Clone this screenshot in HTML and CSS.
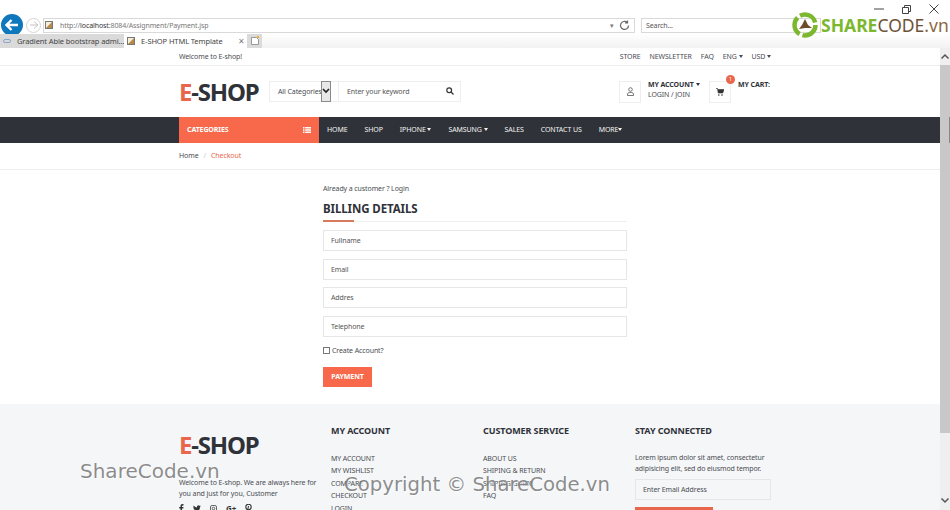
FILE: index.html
```html
<!DOCTYPE html>
<html lang="en">
<head>
<meta charset="utf-8">
<title>E-SHOP HTML Template</title>
<link rel="stylesheet" href="styles.css">
</head>
<body>
<div class="window">
  <header class="chrome">
    <div class="win-controls">
      <svg width="10" height="2" viewBox="0 0 10 2"><path d="M0 1h10" stroke="#444"/></svg>
      <svg width="9" height="9" viewBox="0 0 9 9"><path d="M.5 2.500h6v6h-6zM2.500 2.500v-2h6v6h-2" fill="none" stroke="#444"/></svg>
      <svg width="10" height="10" viewBox="0 0 10 10"><path d="M.5.5l9 9M9.500.5l-9 9" stroke="#444"/></svg>
    </div>
    <div class="addr-row">
      <span class="back"><svg width="14" height="12" viewBox="0 0 14 12"><path d="M6.500 1L1.500 6l5 5M2 6h11" fill="none" stroke="#fff" stroke-width="2.400"/></svg></span>
      <span class="forward"><svg width="10" height="8" viewBox="0 0 10 8"><path d="M5 .5L9 4 5 7.500M9 4H1" fill="none" stroke="#c4c4c4"/></svg></span>
      <div class="addr">
        <span class="favicon"></span>
        <span class="url">http://<b>localhost</b>:8084/Assignment/Payment.jsp</span>
        <span class="addr-tools">▾
          <svg width="11" height="11" viewBox="0 0 11 11"><path d="M9.500 5.500a4 4 0 1 1-1.300-3M8.500 .5v2.500H6" fill="none" stroke="#666" stroke-width="1.200"/></svg>
        </span>
      </div>
      <div class="search-box">Search...</div>
    </div>
    <div class="tabs">
      <div class="tab tab-off"><span class="cloud"></span>Gradient Able bootstrap admi...</div>
      <div class="tab tab-on"><span class="favicon"></span>E-SHOP HTML Template<span class="tab-x">×</span></div>
      <div class="tab-new"><svg width="10" height="10" viewBox="0 0 10 10"><path d="M1.500 1.500h5l2 2v5h-7z" fill="#fff" stroke="#999"/><path d="M7 0h2v2H7z" fill="#f0b030"/></svg></div>
    </div>
  </header>

  <div class="viewport">
    <main class="page">
      <div class="topbar">
        <div class="container topbar-in">
          <span>Welcome to E-shop!</span>
          <nav class="toplinks">
            <span>STORE</span><span>NEWSLETTER</span><span>FAQ</span><span>ENG <i class="caret"></i></span><span>USD <i class="caret"></i></span>
          </nav>
        </div>
      </div>

      <div class="container head">
        <div class="logo"><em>E</em>-SHOP</div>
        <div class="search">
          <span class="cat">All Categories<span class="cat-btn"><svg width="8" height="6" viewBox="0 0 8 6"><path d="M1 1l3 3 3-3" fill="none" stroke="#222" stroke-width="1.600"/></svg></span></span>
          <span class="kw">Enter your keyword</span>
          <svg class="mag" width="8" height="8" viewBox="0 0 8 8"><circle cx="3.200" cy="3.200" r="2.400" fill="none" stroke="#333" stroke-width="1.200"/><path d="M5 5l2.500 2.500" stroke="#333" stroke-width="1.300"/></svg>
        </div>
        <div class="acct">
          <span class="iconbox"><svg width="7" height="9" viewBox="0 0 7 9"><circle cx="3.500" cy="2.500" r="1.800" fill="none" stroke="#555" stroke-width=".8"/><path d="M.5 8.500V7a2 2 0 0 1 2-1.500h2A2 2 0 0 1 6.500 7v1.500z" fill="none" stroke="#555" stroke-width=".8"/></svg></span>
          <div class="acct-text"><b>MY ACCOUNT <i class="caret"></i></b><span>LOGIN / JOIN</span></div>
        </div>
        <div class="cart">
          <span class="iconbox"><svg width="8" height="8" viewBox="0 0 8 8"><path d="M0 .5h1.500L2.200 5h4.600L8 1.500H2" fill="#333" stroke="#333" stroke-width=".6"/><circle cx="2.800" cy="7" r=".8" fill="#333"/><circle cx="6" cy="7" r=".8" fill="#333"/></svg><span class="badge">1</span></span>
          <b>MY CART:</b>
        </div>
      </div>

      <div class="navbar">
        <div class="container nav-in">
          <div class="cats"><span>CATEGORIES</span><svg width="8" height="6" viewBox="0 0 8 6"><path d="M0 0h1.500v1.500H0zM2.200 0H8v1.500H2.200zM0 2.200h1.500v1.500H0zM2.200 2.200H8v1.500H2.200zM0 4.400h1.500V6H0zM2.200 4.400H8V6H2.200z" fill="#fff"/></svg></div>
          <nav class="menu">
            <span>HOME</span><span>SHOP</span><span>IPHONE <i class="caret"></i></span><span>SAMSUNG <i class="caret"></i></span><span>SALES</span><span>CONTACT US</span><span>MORE<i class="caret"></i></span>
          </nav>
        </div>
      </div>

      <div class="crumbs">
        <div class="container"><span>Home</span><span class="sep">/</span><span class="cur">Checkout</span></div>
      </div>

      <section class="checkout">
        <p class="already">Already a customer ? Login</p>
        <h2 class="title">BILLING DETAILS</h2>
        <div class="field">Fullname</div>
        <div class="field">Email</div>
        <div class="field">Addres</div>
        <div class="field">Telephone</div>
        <label class="create"><span class="check"></span>Create Account?</label>
        <div class="pay">PAYMENT</div>
      </section>

      <footer class="footer">
        <div class="container foot-grid">
          <div class="foot-about">
            <div class="logo"><em>E</em>-SHOP</div>
            <p>Welcome to E-shop. We are always here for you and just for you, Customer</p>
            <div class="social">
              <svg width="5" height="8" viewBox="0 0 5 8"><path d="M1.500 8V4.500H.2V3h1.300V2C1.500.7 2.300 0 3.400 0h1.100v1.400h-.7c-.6 0-.8.3-.8.8V3h1.500l-.2 1.500H3V8z" fill="#333"/></svg>
              <svg width="8" height="7" viewBox="0 0 8 7"><path d="M8 1l-1 .6.8-1-1 .4a1.600 1.600 0 0 0-2.800 1.400C2.700 2.300 1.400 1.700.6.600c-.5.800-.2 1.700.4 2.100l-.7-.2c0 .8.500 1.400 1.300 1.600h-.7c.2.600.8 1 1.500 1-.7.600-1.500.8-2.400.7 3 1.800 7 .3 7-3.800z" fill="#333"/></svg>
              <svg width="7" height="7" viewBox="0 0 7 7"><rect x=".5" y=".5" width="6" height="6" rx="1.500" fill="none" stroke="#444" stroke-width=".8"/><circle cx="3.500" cy="3.500" r="1.300" fill="none" stroke="#444" stroke-width=".8"/></svg>
              <span class="gplus">G+</span>
              <svg width="7" height="8" viewBox="0 0 7 8"><circle cx="3.500" cy="3" r="2.700" fill="none" stroke="#333" stroke-width="1.100"/><path d="M3.500 2L2.300 8" stroke="#333"/></svg>
            </div>
          </div>
          <div class="foot-col">
            <h3>MY ACCOUNT</h3>
            <ul><li>MY ACCOUNT</li><li>MY WISHLIST</li><li>COMPARE</li><li>CHECKOUT</li><li>LOGIN</li></ul>
          </div>
          <div class="foot-col">
            <h3>CUSTOMER SERVICE</h3>
            <ul><li>ABOUT US</li><li>SHIPING &amp; RETURN</li><li>SHIPING GUIDE</li><li>FAQ</li></ul>
          </div>
          <div class="foot-col stay">
            <h3>STAY CONNECTED</h3>
            <p>Lorem ipsum dolor sit amet, consectetur adipisicing elit, sed do eiusmod tempor.</p>
            <div class="mail">Enter Email Address</div>
            <div class="join"></div>
          </div>
        </div>
      </footer>
    </main>

    <aside class="scrollbar">
      <span class="arrow"><svg width="10" height="10" viewBox="0 0 10 10"><path d="M1.500 6.500L5 3l3.500 3.500" fill="none" stroke="#555" stroke-width="1.500"/></svg></span>
      <span class="thumb"></span>
      <span class="arrow arrow-end"><svg width="10" height="10" viewBox="0 0 10 10"><path d="M1.500 3.500L5 7l3.500-3.500" fill="none" stroke="#555" stroke-width="1.500"/></svg></span>
    </aside>
  </div>

  <div class="brand">
    <svg width="28" height="28" viewBox="0 0 28 28"><circle cx="14" cy="14" r="10.500" fill="none" stroke="#7cb82f" stroke-width="4.500" stroke-dasharray="19 3"/><path d="M14 8l3 6 4 3h-7l-6 1 3-4z" fill="#6d4a2a"/></svg>
    <span class="brand-a">SHARE</span><span class="brand-b">CODE</span><span class="brand-c">.vn</span>
  </div>
  <div class="mark mark-a">ShareCode.vn</div>
  <div class="mark mark-b">Copyright © ShareCode.vn</div>
</div>
</body>
</html>
```
FILE: styles.css
```css
* { box-sizing: border-box; }
html, body { margin: 0; height: 100%; overflow: hidden; background: #fff; }
body { font-family: "Noto Sans", "Open Sans", sans-serif; font-size: 7px; letter-spacing: -.1px; color: #4a4d52; }
p, h2, h3, ul { margin: 0; padding: 0; }
ul { list-style: none; }
i { font-style: normal; }

.window { position: relative; width: 950px; height: 510px; overflow: hidden; }

/* browser chrome */
.chrome { height: 48px; display: flex; flex-direction: column; background: #fff; color: #555; }
.win-controls { position: absolute; top: 4px; right: 11px; display: flex; align-items: center; gap: 18px; height: 10px; }
.addr-row { height: 34px; display: flex; align-items: center; padding: 16px 0 0 1px; }
.back { width: 22px; height: 22px; flex: none; border-radius: 50%; background: #0f78bd; display: flex; align-items: center; justify-content: center; margin-top: -1px; }
.forward { width: 15px; height: 15px; flex: none; margin: 0 2px 0 3px; border: 1px solid #d4d4d4; border-radius: 50%; display: flex; align-items: center; justify-content: center; }
.addr { width: 592px; height: 15px; flex: none; border: 1px solid #d9d9d9; display: flex; align-items: center; padding: 0 4px 0 1px; font-size: 7px; color: #777; }
.url b { color: #333; font-weight: 400; }
.favicon { width: 8px; height: 8px; flex: none; border: 1px solid #777; background: linear-gradient(135deg, #f5f0dc 45%, #b88a4a 55%); }
.addr .favicon { margin-right: 7px; }
.addr-tools { margin-left: auto; display: flex; align-items: center; gap: 5px; }
.search-box { width: 180px; height: 15px; flex: none; margin-left: 6px; border: 1px solid #d9d9d9; padding-left: 4px; line-height: 13px; color: #555; }
.tabs { height: 14px; display: flex; background: linear-gradient(#ffffff, #f2f2f2); }
.tab { display: flex; align-items: center; height: 14px; font-size: 7.500px; color: #444; }
.tab-off { width: 124px; padding-left: 3px; background: #dadada; white-space: nowrap; }
.cloud { width: 8px; height: 4px; flex: none; margin-right: 6px; border-radius: 3px; border: 1px solid #8aa6d0; }
.tab-on { width: 123px; padding-left: 3px; background: #fff; }
.tab-on .favicon { margin-right: 6px; }
.tab-x { margin-left: auto; margin-right: 3px; font-size: 10px; color: #777; }
.tab-new { width: 15px; background: #dadada; display: flex; align-items: center; justify-content: center; }

/* page */
.viewport { display: flex; height: 462px; }
.page { width: 940px; flex: none; overflow: hidden; }
.container { width: 592px; margin-left: 179px; }

.topbar { height: 18px; border-bottom: 1px solid #eeeeee; }
.topbar-in { display: flex; justify-content: space-between; align-items: center; height: 17px; }
.toplinks { display: flex; gap: 9px; }
.caret { display: inline-block; width: 0; height: 0; border: 2.500px solid transparent; border-top: 3px solid currentColor; border-bottom: 0; vertical-align: 1px; }

.head { height: 51px; display: flex; align-items: center; }
.logo { font-weight: 700; font-size: 24px; line-height: 26px; color: #2f3238; letter-spacing: -1.200px; white-space: nowrap; }
.logo em { font-style: normal; color: #e8674c; }
.head .logo { width: 90px; flex: none; margin-top: 0; }
.search { width: 192px; height: 21px; flex: none; border: 1px solid #eeeeee; display: flex; align-items: center; margin-top: -1px; }
.cat { width: 69px; height: 19px; flex: none; display: flex; align-items: center; padding-left: 8px; border-right: 1px solid #eee; white-space: nowrap; position: relative; }
.cat-btn { position: absolute; left: 51px; top: -1px; width: 10px; height: 21px; background: #e8e8e8; border: 1px solid #8a8a8a; display: flex; align-items: center; justify-content: center; }
.kw { margin-left: 8px; color: #555; }
.mag { margin-left: auto; margin-right: 6px; }
.acct { display: flex; align-items: flex-start; margin-left: 158px; width: 90px; flex: none; }
.iconbox { position: relative; width: 22px; height: 22px; flex: none; border: 1px solid #eeeeee; display: flex; align-items: center; justify-content: center; }
.acct-text { margin-left: 7px; display: flex; flex-direction: column; line-height: 10px; margin-top: -1px; }
.acct-text b, .cart b { color: #2f3238; font-weight: 700; }
.cart { display: flex; align-items: flex-start; line-height: 10px; }
.cart b { margin-left: 7px; margin-top: -1px; }
.badge { position: absolute; top: -7px; right: -5px; width: 9px; height: 9px; border-radius: 50%; background: #e8674c; color: #fff; font-size: 5px; line-height: 9px; text-align: center; }

.navbar { height: 26px; background: #2f3238; }
.nav-in { display: flex; height: 26px; }
.cats { width: 140px; flex: none; background: #f7694a; color: #fff; font-weight: 700; display: flex; align-items: center; justify-content: space-between; padding: 0 8px 1px; }
.menu { display: flex; align-items: center; gap: 17px; padding: 0 0 1px 8px; color: #f2f2f2; white-space: nowrap; }

.crumbs { height: 27px; border-bottom: 1px solid #eeeeee; display: flex; align-items: center; padding-bottom: 1px; }
.sep { margin: 0 5px; color: #ccc; }
.cur { color: #e8674c; }

.checkout { width: 304px; margin-left: 323px; height: 234px; padding-top: 14px; }
.already { line-height: 10px; }
.title { margin-top: 8px; height: 20px; font-size: 11.500px; line-height: 13px; color: #2f3238; border-bottom: 1px solid #eeeeee; position: relative; }
.title::after { content: ""; position: absolute; left: 0; bottom: -1px; width: 31px; height: 2px; background: #d87a5e; }
.field { height: 21px; margin-top: 7.700px; border: 1px solid #e6e6e6; padding-left: 7px; line-height: 19px; color: #555; }
.title + .field { margin-top: 8px; }
.create { display: flex; align-items: center; margin-top: 8px; height: 10px; }
.check { width: 7px; height: 7px; margin-right: 2px; border: 1px solid #777; background: #fff; }
.pay { width: 49px; height: 20px; margin-top: 12px; background: #f7694a; color: #fff; font-weight: 700; text-align: center; line-height: 19px; }

.footer { height: 106px; background: #f5f6f8; overflow: hidden; }
.foot-grid { display: grid; grid-template-columns: 152px 152px 152px 136px; padding-top: 22px; }
.foot-about { padding-top: 6px; }
.foot-about p { margin-top: 20px; width: 140px; line-height: 10.500px; }
.social { display: flex; align-items: center; gap: 9px; margin-top: 5px; height: 8px; }
.gplus { font-size: 8px; font-weight: 700; color: #333; }
.foot-col h3 { font-size: 9px; line-height: 10px; color: #2f3238; }
.foot-col ul { margin-top: 17px; }
.foot-col li { line-height: 12.400px; }
.stay p { margin-top: 17px; line-height: 10.500px; }
.mail { height: 21px; margin-top: 5px; border: 1px solid #e6e6e6; padding-left: 7px; line-height: 19px; }
.join { width: 78px; height: 20px; margin-top: 7px; background: #e8674c; }

.scrollbar { flex: none; width: 10px; background: #efefef; display: flex; flex-direction: column; }
.arrow { height: 17px; flex: none; display: flex; align-items: center; justify-content: center; }
.arrow-end { margin-top: auto; height: 20px; }
.thumb { height: 368px; flex: none; background: #c8c8c8; position: relative; }
.thumb::after { content: ""; position: absolute; right: 0; top: 52px; width: 1px; height: 26px; background: #888; }

/* overlays */
.brand { position: absolute; top: 11px; left: 791px; display: flex; align-items: center; font-size: 17.500px; letter-spacing: 0; height: 28px; }
.brand-a { margin-left: 2px; color: #7cb82f; font-weight: 700; }
.brand-b { color: #6d5236; }
.brand-c { color: #8a6a44; }
.mark { position: absolute; font-family: "DejaVu Sans", sans-serif; letter-spacing: 0; color: rgba(120,120,120,.85); text-shadow: 1px 1px 1px rgba(255,255,255,.8); white-space: nowrap; }
.mark-a { left: 80px; top: 459px; font-size: 20px; }
.mark-b { left: 344px; top: 473px; font-size: 19.700px; }
```
